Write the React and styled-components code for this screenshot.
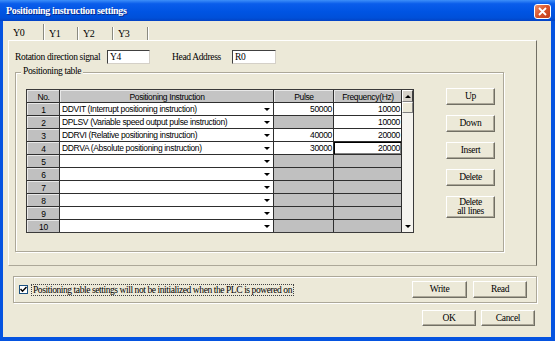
import React from "react";
import styled, { createGlobalStyle } from "styled-components";

const GlobalStyle = createGlobalStyle`
  html, body {
    margin: 0;
    padding: 0;
    background: #ece9d8;
  }
  * {
    box-sizing: border-box;
  }
`;

const serif = `"Liberation Serif", "Times New Roman", serif`;
const sans = `"Liberation Sans", Arial, sans-serif`;

const Window = styled.div`
  width: 555px;
  height: 341px;
  display: flex;
  flex-direction: column;
  background: #0553e0;
`;

const TitleBar = styled.div`
  height: 21px;
  display: flex;
  align-items: center;
  justify-content: space-between;
  padding: 0 4px 0 6px;
  background: linear-gradient(#3d8ff9 0%, #0a5deb 18%, #0054e3 55%, #0050d9 85%, #0342c4 100%);
`;

const Title = styled.span`
  color: #fff;
  font: bold 10px ${serif};
  letter-spacing: -0.35px;
  text-shadow: 1px 1px 0 #0a2a8a;
`;

const CloseButton = styled.div`
  width: 17px;
  height: 15px;
  margin-top: 1px;
  border: 1px solid #fff;
  border-radius: 3px;
  background: linear-gradient(135deg, #f0906a 0%, #d8532a 50%, #c03c18 100%);
  display: flex;
  align-items: center;
  justify-content: center;
`;

const Body = styled.div`
  flex: 1;
  margin: 0 4px 4px 3px;
  background: #ece9d8;
  padding: 3px 14px 0 5px;
  display: flex;
  flex-direction: column;
  font: 9.5px ${serif};
  letter-spacing: -0.35px;
  color: #000;
`;

const Tabs = styled.div`
  height: 16px;
  display: flex;
  align-items: flex-end;
`;

const Tab = styled.div`
  width: ${(p) => p.$w}px;
  height: ${(p) => (p.$active ? 16 : 13)}px;
  padding-left: 5px;
  display: flex;
  align-items: center;
  border-right: 1px solid #8a8a80;
  box-shadow: 1px 0 0 #fff;
  font-size: 10px;
`;

const Panel = styled.div`
  height: 226px;
  border-top: 1px solid #fff;
  border-left: 1px solid #fff;
  border-right: 1px solid #716f64;
  border-bottom: 1px solid #aca899;
  padding: 9px 0 0 6px;
`;

const FieldRow = styled.div`
  height: 14px;
  display: flex;
  align-items: center;
`;

const Label = styled.span`
  width: ${(p) => p.$w}px;
  white-space: nowrap;
`;

const TextBox = styled.div`
  width: ${(p) => p.$w}px;
  height: 14px;
  margin-right: ${(p) => p.$mr || 0}px;
  background: #fff;
  border-top: 1px solid #404040;
  border-left: 1px solid #404040;
  border-right: 1px solid #d4d0c8;
  border-bottom: 1px solid #d4d0c8;
  padding-left: 2px;
  line-height: 12px;
`;

const Group = styled.div`
  position: relative;
  width: 489px;
  height: 180px;
  margin-top: 8px;
  border: 1px solid #aca899;
  box-shadow: inset 1px 1px 0 #fff, 1px 1px 0 #fff;
  padding: 16px 0 0 10px;
  display: flex;
  gap: 32px;
`;

const GroupLabel = styled.span`
  position: absolute;
  top: -7px;
  left: 5px;
  padding: 0 2px;
  background: #ece9d8;
`;

const TableFrame = styled.div`
  width: 388px;
  height: 144px;
  display: flex;
  border: 1px solid #3a3a3a;
  font: 8.5px ${sans};
  letter-spacing: -0.35px;
`;

const Grid = styled.div`
  display: grid;
  grid-template-columns: 32px 213px 59px 67px;
  grid-auto-rows: 12px;
  gap: 1px;
  background: #2e2e2e;
`;

const HeadCell = styled.div`
  background: #c4c4c4;
  display: flex;
  align-items: center;
  justify-content: center;
  border-top: 1px solid #e8e8e8;
  border-left: 1px solid #e8e8e8;
`;

const NoCell = styled(HeadCell)`
  background: #c0c0c0;
`;

const InstrCell = styled.div`
  background: #fff;
  display: flex;
  align-items: center;
  padding-left: 2px;
  white-space: nowrap;
  overflow: hidden;
`;

const InstrText = styled.span`
  flex: 1;
`;

const DropArrow = styled.span`
  width: 0;
  height: 0;
  margin-right: 3px;
  border-left: 3px solid transparent;
  border-right: 3px solid transparent;
  border-top: 3px solid #000;
`;

const ValueCell = styled.div`
  background: ${(p) => (p.$empty ? "#c0c0c0" : "#fff")};
  display: flex;
  align-items: center;
  justify-content: flex-end;
  padding-right: 1px;
  box-shadow: ${(p) => (p.$focus ? "inset 1px 1px 0 #000, inset -1px -1px 0 #808080" : "none")};
`;

const ScrollBar = styled.div`
  width: 12px;
  display: flex;
  flex-direction: column;
  align-items: center;
  background: #f5f4ef;
  border-left: 1px solid #2e2e2e;
`;

const ScrollButton = styled.div`
  width: 11px;
  height: 12px;
  background: #d4d0c8;
  border-top: 1px solid #fff;
  border-left: 1px solid #fff;
  border-right: 1px solid #404040;
  border-bottom: 1px solid #808080;
  display: flex;
  align-items: center;
  justify-content: center;
`;

const Thumb = styled.div`
  width: 11px;
  height: 11px;
  background: #ece9d8;
  border-top: 1px solid #fff;
  border-left: 1px solid #fff;
  border-right: 1px solid #808080;
  border-bottom: 1px solid #808080;
`;

const Spacer = styled.div`
  flex: 1;
`;

const Triangle = styled.span`
  width: 0;
  height: 0;
  border-left: 3px solid transparent;
  border-right: 3px solid transparent;
  ${(p) => (p.$up ? "border-bottom: 3px solid #000;" : "border-top: 3px solid #000;")}
  margin-bottom: ${(p) => (p.$up ? 0 : 4)}px;
`;

const ButtonColumn = styled.div`
  display: flex;
  flex-direction: column;
  gap: 10px;
  margin-top: -1px;
`;

const Button = styled.div`
  width: ${(p) => p.$w}px;
  height: ${(p) => p.$h || 17}px;
  display: flex;
  align-items: center;
  justify-content: center;
  text-align: center;
  line-height: 9px;
  background: #ece9d8;
  border-top: 1px solid #fff;
  border-left: 1px solid #fff;
  border-right: 1px solid #716f64;
  border-bottom: 1px solid #716f64;
  box-shadow: inset -1px -1px 0 #aca899;
`;

const BottomGroup = styled.div`
  height: 27px;
  margin: 10px 0 0 5px;
  border: 1px solid #aca899;
  box-shadow: inset 1px 1px 0 #fff, 1px 1px 0 #fff;
  padding: 0 9px 0 5px;
  display: flex;
  align-items: center;
  gap: 6px;
`;

const CheckBox = styled.div`
  width: 9px;
  height: 9px;
  background: #fff;
  border: 1px solid #1c5180;
  display: flex;
  align-items: center;
  justify-content: center;
`;

const CheckLabel = styled.span`
  margin-left: -3px;
  margin-right: auto;
  padding: 0 1px;
  border: 1px dotted #404040;
  white-space: nowrap;
  letter-spacing: -0.42px;
`;

const Footer = styled.div`
  margin-top: 7px;
  padding-right: 2px;
  display: flex;
  justify-content: flex-end;
  gap: 5px;
`;

const rows = [
  { instr: "DDVIT (Interrupt positioning instruction)", pulse: "50000", freq: "10000" },
  { instr: "DPLSV (Variable speed output pulse instruction)", pulse: null, freq: "10000" },
  { instr: "DDRVI (Relative positioning instruction)", pulse: "40000", freq: "20000" },
  { instr: "DDRVA (Absolute positioning instruction)", pulse: "30000", freq: "20000", focus: true },
  {}, {}, {}, {}, {}, {},
];

const tabs = [
  { name: "Y0", w: 36 },
  { name: "Y1", w: 34 },
  { name: "Y2", w: 35 },
  { name: "Y3", w: 35 },
];

export default function App() {
  return (
    <>
      <GlobalStyle />
      <Window>
        <TitleBar>
          <Title>Positioning instruction settings</Title>
          <CloseButton>
            <svg width="9" height="9" viewBox="0 0 9 9">
              <path d="M1 1 L8 8 M8 1 L1 8" stroke="#fff" strokeWidth="1.8" />
            </svg>
          </CloseButton>
        </TitleBar>
        <Body>
          <Tabs>
            {tabs.map((t, i) => (
              <Tab key={t.name} $w={t.w} $active={i === 0}>
                {t.name}
              </Tab>
            ))}
          </Tabs>
          <Panel>
            <FieldRow>
              <Label $w={92}>Rotation direction signal</Label>
              <TextBox $w={43} $mr={22}>Y4</TextBox>
              <Label $w={60}>Head Address</Label>
              <TextBox $w={44}>R0</TextBox>
            </FieldRow>
            <Group>
              <GroupLabel>Positioning table</GroupLabel>
              <TableFrame>
                <Grid>
                  <HeadCell>No.</HeadCell>
                  <HeadCell>Positioning Instruction</HeadCell>
                  <HeadCell>Pulse</HeadCell>
                  <HeadCell>Frequency(Hz)</HeadCell>
                  {rows.map((r, i) => (
                    <React.Fragment key={i}>
                      <NoCell>{i + 1}</NoCell>
                      <InstrCell>
                        <InstrText>{r.instr}</InstrText>
                        <DropArrow />
                      </InstrCell>
                      <ValueCell $empty={!r.pulse}>{r.pulse}</ValueCell>
                      <ValueCell $empty={!r.freq} $focus={r.focus}>{r.freq}</ValueCell>
                    </React.Fragment>
                  ))}
                </Grid>
                <ScrollBar>
                  <ScrollButton>
                    <Triangle $up />
                  </ScrollButton>
                  <Thumb />
                  <Spacer />
                  <Triangle />
                </ScrollBar>
              </TableFrame>
              <ButtonColumn>
                <Button $w={49}>Up</Button>
                <Button $w={49}>Down</Button>
                <Button $w={49}>Insert</Button>
                <Button $w={49}>Delete</Button>
                <Button $w={49} $h={22}>
                  Delete
                  <br />
                  all lines
                </Button>
              </ButtonColumn>
            </Group>
          </Panel>
          <BottomGroup>
            <CheckBox>
              <svg width="7" height="7" viewBox="0 0 7 7">
                <path d="M0.5 3 L2.5 5.2 L6.5 1" stroke="#000" strokeWidth="1.5" fill="none" />
              </svg>
            </CheckBox>
            <CheckLabel>Positioning table settings will not be initialized when the PLC is powered on</CheckLabel>
            <Button $w={55}>Write</Button>
            <Button $w={54}>Read</Button>
          </BottomGroup>
          <Footer>
            <Button $w={54} $h={16}>OK</Button>
            <Button $w={54} $h={16}>Cancel</Button>
          </Footer>
        </Body>
      </Window>
    </>
  );
}
